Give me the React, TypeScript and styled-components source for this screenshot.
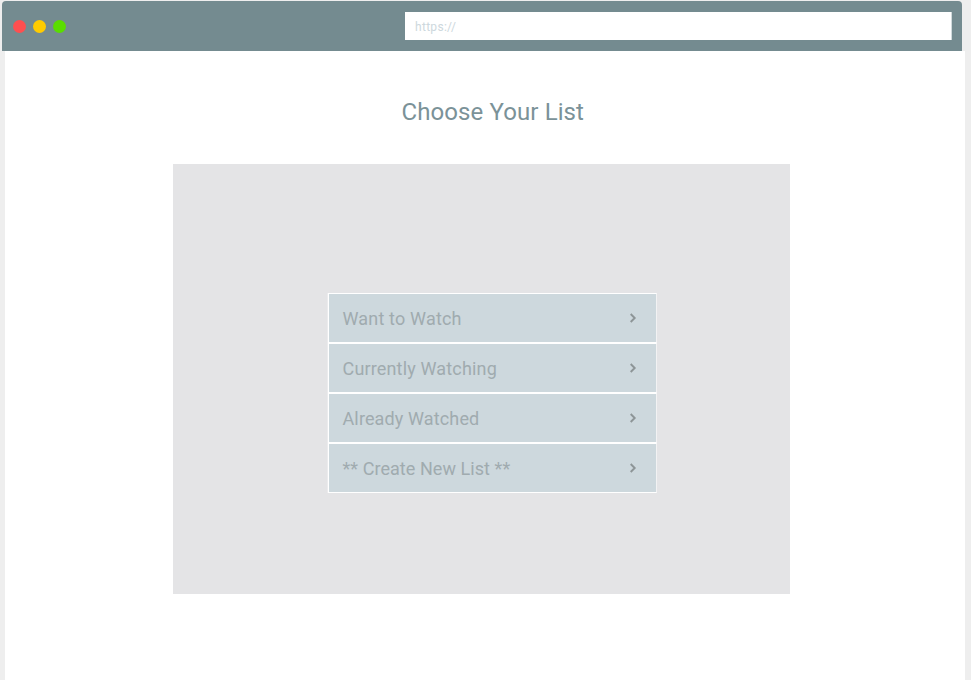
import React from "react";
import styled, { createGlobalStyle } from "styled-components";

const GlobalStyle = createGlobalStyle`
  *, *::before, *::after { box-sizing: border-box; }
  body { margin: 0; background: #eeeeee; font-family: Roboto, sans-serif; overflow: hidden; }
`;

const Page = styled.div`
  height: 680px;
  padding-top: 1px;
  display: flex;
  flex-direction: column;
`;

const TitleBar = styled.header`
  width: 960px;
  height: 50px;
  flex: none;
  margin-left: 2px;
  padding: 0 10px 0 11px;
  display: flex;
  align-items: center;
  justify-content: space-between;
  background: #748b90;
  border-radius: 4px 4px 0 0;
`;

const Lights = styled.div`
  display: flex;
  gap: 7px;
`;

const Light = styled.span<{ $color: string }>`
  width: 13px;
  height: 13px;
  border-radius: 50%;
  background: ${(p) => p.$color};
`;

const AddressBar = styled.div`
  width: 547px;
  height: 28px;
  padding-left: 10px;
  border-right: 1px solid #d0d9db;
  background: #fff;
  color: #cdd8dd;
  font-size: 12px;
  line-height: 30px;
  letter-spacing: 0.3px;
`;

const Content = styled.main`
  width: 960px;
  margin-left: 5px;
  flex: 1;
  background: #fff;
`;

const Heading = styled.h1`
  margin: 0 0 0 396.5px;
  padding-top: 44px;
  height: 113px;
  font-size: 24px;
  line-height: 34px;
  font-weight: 400;
  letter-spacing: 0.1px;
  color: #7b9298;
`;

const Panel = styled.section`
  width: 617px;
  height: 430px;
  margin-left: 168px;
  padding: 129px 0 0 155px;
  background: #e4e4e6;
`;

const List = styled.ul`
  width: 329px;
  margin: 0;
  padding: 0;
  list-style: none;
  box-shadow: -1px 0 #ebebed;
`;

const Item = styled.li<{ $tracking: number }>`
  height: 50px;
  padding: 0 19px 0 13.5px;
  display: flex;
  align-items: center;
  justify-content: space-between;
  border: 1px solid #fff;
  border-right-color: #f2f2f3;
  background: #cdd8dd;
  color: #a0abaf;
  font-size: 18px;
  letter-spacing: ${(p) => p.$tracking}px;
`;

const Chevron = () => (
  <svg width="8" height="10" viewBox="0 0 8 10" fill="none" stroke="#8d9597" strokeWidth="1.9">
    <path d="M1.7 1l4 4-4 4" />
  </svg>
);

const lists = [
  { name: "Want to Watch", tracking: 0.17 },
  { name: "Currently Watching", tracking: 0.16 },
  { name: "Already Watched", tracking: 0.13 },
  { name: "** Create New List **", tracking: 0.06 },
];

export default function App() {
  return (
    <Page>
      <GlobalStyle />
      <TitleBar>
        <Lights>
          <Light $color="#ff4f50" />
          <Light $color="#ffcc00" />
          <Light $color="#5add00" />
        </Lights>
        <AddressBar>https://</AddressBar>
      </TitleBar>
      <Content>
        <Heading>Choose Your List</Heading>
        <Panel>
          <List>
            {lists.map(({ name, tracking }) => (
              <Item key={name} $tracking={tracking}>
                <span>{name}</span>
                <Chevron />
              </Item>
            ))}
          </List>
        </Panel>
      </Content>
    </Page>
  );
}
